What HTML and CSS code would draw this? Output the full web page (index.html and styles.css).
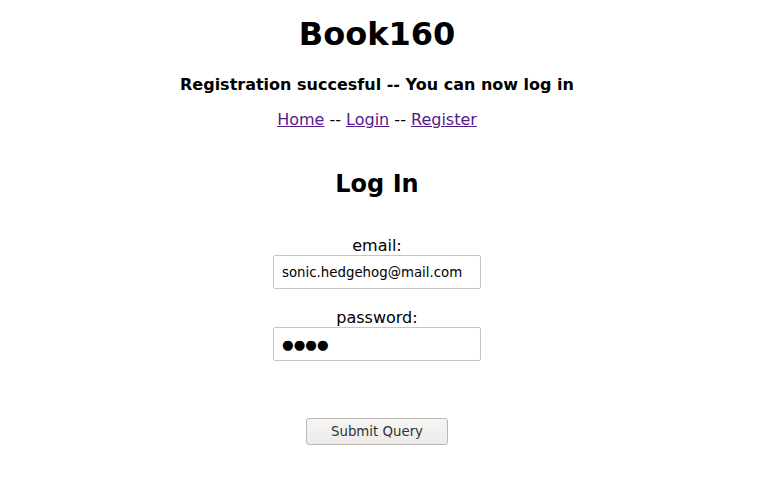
FILE: index.html
```html
<!DOCTYPE html>
<html>
<head>
<meta charset="utf-8">
<link rel="stylesheet" href="styles.css">
</head>
<body>
<div class="page">
  <h1 class="title">Book160</h1>
  <p class="msg">Registration succesful -- You can now log in</p>
  <p class="nav"><a href="#">Home</a> -- <a href="#">Login</a> -- <a href="#">Register</a></p>
  <h2 class="heading">Log In</h2>
  <form class="form">
    <label class="label">email:</label>
    <input class="field" type="text" value="sonic.hedgehog@mail.com">
    <label class="label label-pw">password:</label>
    <input class="field field-pw" type="text" value="●●●●">
    <button class="submit" type="button">Submit Query</button>
  </form>
</div>
</body>
</html>
```
FILE: styles.css
```css
html, body {
  margin: 0;
  padding: 0;
  background: #fff;
}
.page {
  font-family: "DejaVu Sans", sans-serif;
  color: #000;
  display: flex;
  flex-direction: column;
  align-items: center;
  text-align: center;
  padding-right: 6px;
}
.title {
  font-size: 32px;
  line-height: 38px;
  margin: 15px 0 0;
  font-weight: bold;
}
.msg {
  font-size: 16px;
  font-weight: bold;
  line-height: 19px;
  margin: 22px 0 0;
}
.nav {
  font-size: 16px;
  line-height: 19px;
  margin: 16px 0 0;
}
.nav a {
  color: #551a8b;
}
.heading {
  font-size: 24px;
  line-height: 28px;
  margin: 41px 0 0;
  font-weight: bold;
}
.form {
  display: flex;
  flex-direction: column;
  align-items: center;
  margin-top: 38px;
}
.label {
  font-size: 16px;
  line-height: 19px;
}
.label-pw {
  margin-top: 19px;
}
.field {
  box-sizing: border-box;
  width: 208px;
  height: 34px;
  border: 1px solid #c9c6c2;
  border-radius: 2px;
  padding: 0 8px;
  font-family: "DejaVu Sans", sans-serif;
  font-size: 13.333px;
  color: #000;
  background: #fff;
  margin: 0;
}
.submit {
  margin-top: 57px;
  box-sizing: border-box;
  width: 142px;
  height: 27px;
  border: 1px solid #bcb8b3;
  border-radius: 3px;
  background: linear-gradient(#f6f5f4, #edebe9);
  font-family: "DejaVu Sans", sans-serif;
  font-size: 13.333px;
  color: #2e3436;
  padding: 0;
}
```
